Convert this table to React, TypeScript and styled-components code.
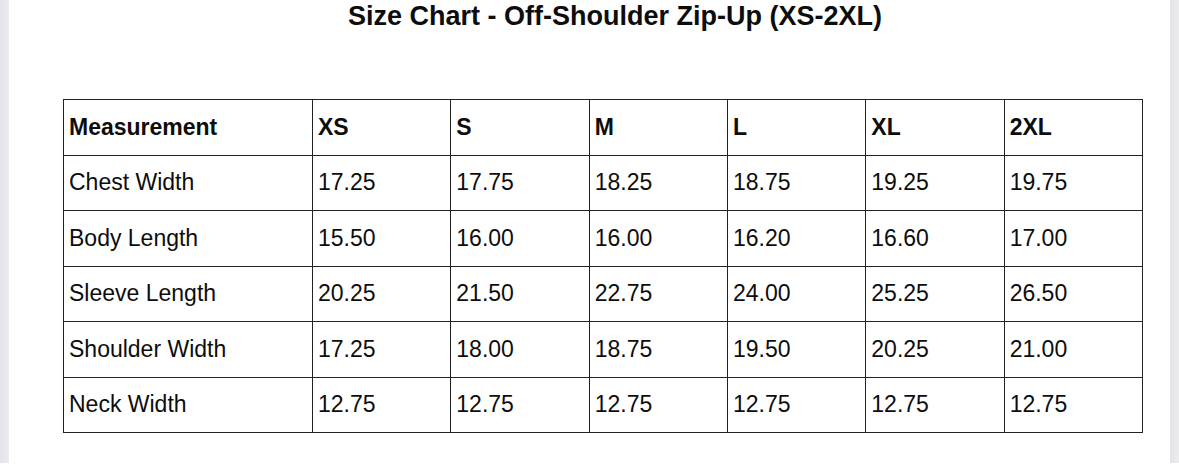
import React from 'react'
import styled, { createGlobalStyle } from 'styled-components'

const sizes = ['XS', 'S', 'M', 'L', 'XL', '2XL']

const rows: [string, string[]][] = [
  ['Chest Width', ['17.25', '17.75', '18.25', '18.75', '19.25', '19.75']],
  ['Body Length', ['15.50', '16.00', '16.00', '16.20', '16.60', '17.00']],
  ['Sleeve Length', ['20.25', '21.50', '22.75', '24.00', '25.25', '26.50']],
  ['Shoulder Width', ['17.25', '18.00', '18.75', '19.50', '20.25', '21.00']],
  ['Neck Width', ['12.75', '12.75', '12.75', '12.75', '12.75', '12.75']],
]

const App = () => {
  return (
    <>
      <GlobalStyle />
      <Frame>
        <Edge />
        <Main>
          <Title>Size Chart - Off-Shoulder Zip-Up (XS-2XL)</Title>
          <Chart>
            <colgroup>
              <col style={{ width: 249 }} />
              {sizes.map((s) => (
                <col key={s} />
              ))}
            </colgroup>
            <tbody>
              <tr>
                <Cell head>Measurement</Cell>
                {sizes.map((s) => (
                  <Cell head key={s}>{s}</Cell>
                ))}
              </tr>
              {rows.map(([name, vals]) => (
                <tr key={name}>
                  <Cell>{name}</Cell>
                  {vals.map((v, i) => (
                    <Cell key={i}>{v}</Cell>
                  ))}
                </tr>
              ))}
            </tbody>
          </Chart>
        </Main>
        <Edge />
      </Frame>
    </>
  )
}

export default App

const GlobalStyle = createGlobalStyle`
  html, body {
    margin: 0;
    padding: 0;
    background: #ffffff;
  }
  body {
    font-family: "Liberation Sans", Arial, sans-serif;
    color: #111;
  }
`

const Frame = styled.div`
  width: 1179px;
  height: 463px;
  display: flex;
  background: #ffffff;
`

const Edge = styled.div`
  width: 9px;
  flex: none;
  background: linear-gradient(90deg, #e4e4e8, #ececf0);
`

const Main = styled.div`
  flex: 1;
  display: flex;
  flex-direction: column;
`

const Title = styled.div`
  padding: 1px 0 0 339px;
  font-size: 27px;
  font-weight: 700;
  line-height: 31px;
  color: #0d0d0d;
  white-space: nowrap;
`

const Chart = styled.table`
  margin: 67px 0 0 54px;
  width: 1080px;
  border-collapse: collapse;
  table-layout: fixed;
`

const Cell = styled.td<{ head?: boolean }>`
  height: 55.5px;
  box-sizing: border-box;
  border: 1px solid #222;
  padding: 0 0 0 5px;
  font-size: 23px;
  font-weight: ${(p) => (p.head ? 700 : 400)};
  color: #0d0d0d;
  vertical-align: middle;
  white-space: nowrap;
`
